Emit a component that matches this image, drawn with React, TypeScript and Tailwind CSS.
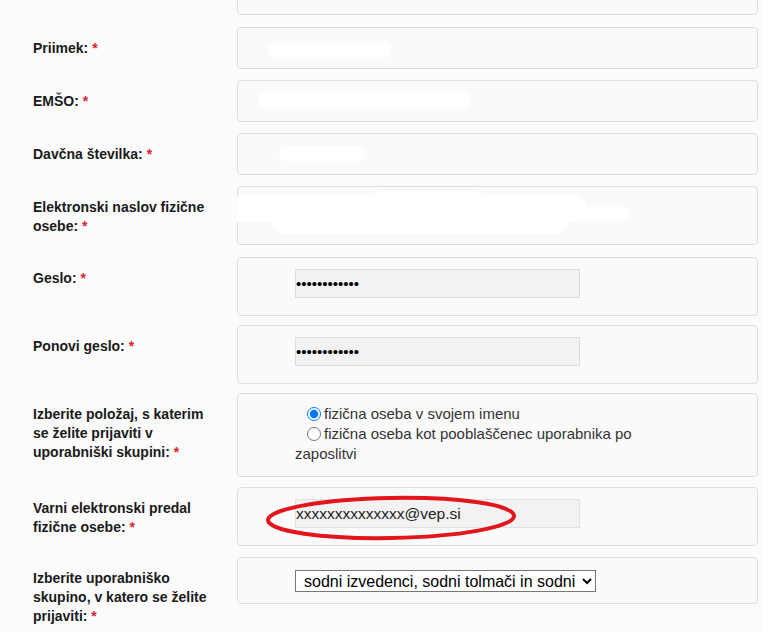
import React from "react";

// rows of the registration form, top margin of each box written out in full
const rows = [
  { label: "Ime:", mt: "mt-[-27px]", box: "h-[42px]", kind: "blank" },
  { label: "Priimek:", mt: "mt-[12px]", box: "h-[42px]", kind: "priimek" },
  { label: "EMŠO:", mt: "mt-[11px]", box: "h-[42px]", kind: "emso" },
  { label: "Davčna številka:", mt: "mt-[11px]", box: "h-[42px]", kind: "davcna" },
  { label: "Elektronski naslov fizične osebe:", mt: "mt-[11px]", box: "h-[59px]", kind: "email" },
  { label: "Geslo:", mt: "mt-[12px]", box: "h-[59px]", kind: "password" },
  { label: "Ponovi geslo:", mt: "mt-[9px]", box: "h-[59px]", kind: "password" },
  { label: "Izberite položaj, s katerim se želite prijaviti v uporabniški skupini:", mt: "mt-[9px]", box: "h-[84px]", kind: "radio" },
  { label: "Varni elektronski predal fizične osebe:", mt: "mt-[10px]", box: "h-[59px]", kind: "vep" },
  { label: "Izberite uporabniško skupino, v katero se želite prijaviti:", mt: "mt-[11px]", box: "h-[47px]", kind: "select" },
];

function BoxContent({ kind }: { kind: string }) {
  // white smudges are the redactions painted over the personal data
  if (kind === "priimek") {
    return <div className="absolute left-[30px] top-[13px] h-[18px] w-[123px] rounded-full bg-white" />;
  }
  if (kind === "emso") {
    return <div className="absolute left-[21px] top-[8px] h-[22px] w-[212px] rounded-full bg-white" />;
  }
  if (kind === "davcna") {
    return <div className="absolute left-[41px] top-[12px] h-[15px] w-[87px] rounded-full bg-white" />;
  }
  if (kind === "email") {
    return (
      <>
        <div className="absolute left-[58px] top-[12px] h-[29px] w-[285px] border-t border-[#e4e4e4]" />
        <div className="absolute left-[-1px] top-[9px] h-[26px] w-[350px] rounded-r-full bg-white" />
        <div className="absolute left-[32px] top-[17px] h-[30px] w-[300px] rounded-full bg-white" />
        <div className="absolute left-[150px] top-[20px] h-[14px] w-[241px] rounded-full bg-white" />
        <div className="absolute left-[135px] top-[4px] h-[20px] w-[110px] rounded-full bg-white" />
      </>
    );
  }
  if (kind === "password") {
    return (
      <div className="pl-[57px] pt-[11px]">
        <input
          type="password"
          readOnly
          value="************"
          className="block h-[29px] w-[285px] border border-[#dcdcdc] bg-[#f2f2f2] px-0 text-[15px] text-black outline-none"
        />
      </div>
    );
  }
  if (kind === "radio") {
    return (
      <div className="w-[430px] pl-[57px] pt-[10px] text-[15px] leading-[20px] text-[#333]">
        <span className="inline-block w-[12px]" />
        <input type="radio" name="polozaj" defaultChecked className="mr-[3px] h-[14px] w-[14px] align-[-2px]" />
        fizična oseba v svojem imenu
        <br />
        <span className="inline-block w-[12px]" />
        <input type="radio" name="polozaj" className="mr-[3px] h-[14px] w-[14px] align-[-2px]" />
        fizična oseba kot pooblaščenec uporabnika po zaposlitvi
      </div>
    );
  }
  if (kind === "vep") {
    return (
      <div className="relative pl-[57px] pt-[11px]">
        <input
          type="text"
          readOnly
          value="xxxxxxxxxxxxxx@vep.si"
          className="block h-[29px] w-[285px] border border-[#e0e0e0] bg-[#f2f2f2] px-0 text-[15.5px] text-[#222] outline-none"
        />
        {/* red marker ellipse drawn over the field */}
        <svg className="pointer-events-none absolute left-[26px] top-[5px]" width="256" height="50" viewBox="0 0 256 50">
          <ellipse cx="127" cy="25" rx="123" ry="20" fill="none" stroke="#e3151c" strokeWidth="4" transform="rotate(-1 127 25)" />
        </svg>
      </div>
    );
  }
  if (kind === "select") {
    return (
      <div className="pl-[57px] pt-[12px]">
        <select className="block h-[22px] w-[301px] border border-[#767676] bg-white pl-[4px] text-[16px] text-black outline-none">
          <option>sodni izvedenci, sodni tolmači in sodni cenilci</option>
        </select>
      </div>
    );
  }
  return null;
}

export default function App() {
  return (
    <div
      className="h-[632px] w-[783px] overflow-hidden bg-white"
      style={{ fontFamily: '"Liberation Sans", Arial, sans-serif' }}
    >
      <div className="w-[763px] bg-[#fbfbfb] pl-[33px] pb-[40px]">
        {rows.map((row) => (
          <div key={row.label} className={`flex items-start ${row.mt}`}>
            <div className="w-[204px] shrink-0 pt-[12px] pr-[26px] text-[14px] font-bold leading-[19px] text-[#1a1a1a]">
              {row.label} <span className="text-[#d9232d]">*</span>
            </div>
            <div className={`relative w-[521px] shrink-0 rounded-[4px] border border-[#dedede] bg-[#fbfafb] ${row.box}`}>
              <BoxContent kind={row.kind} />
            </div>
          </div>
        ))}
      </div>
    </div>
  );
}
